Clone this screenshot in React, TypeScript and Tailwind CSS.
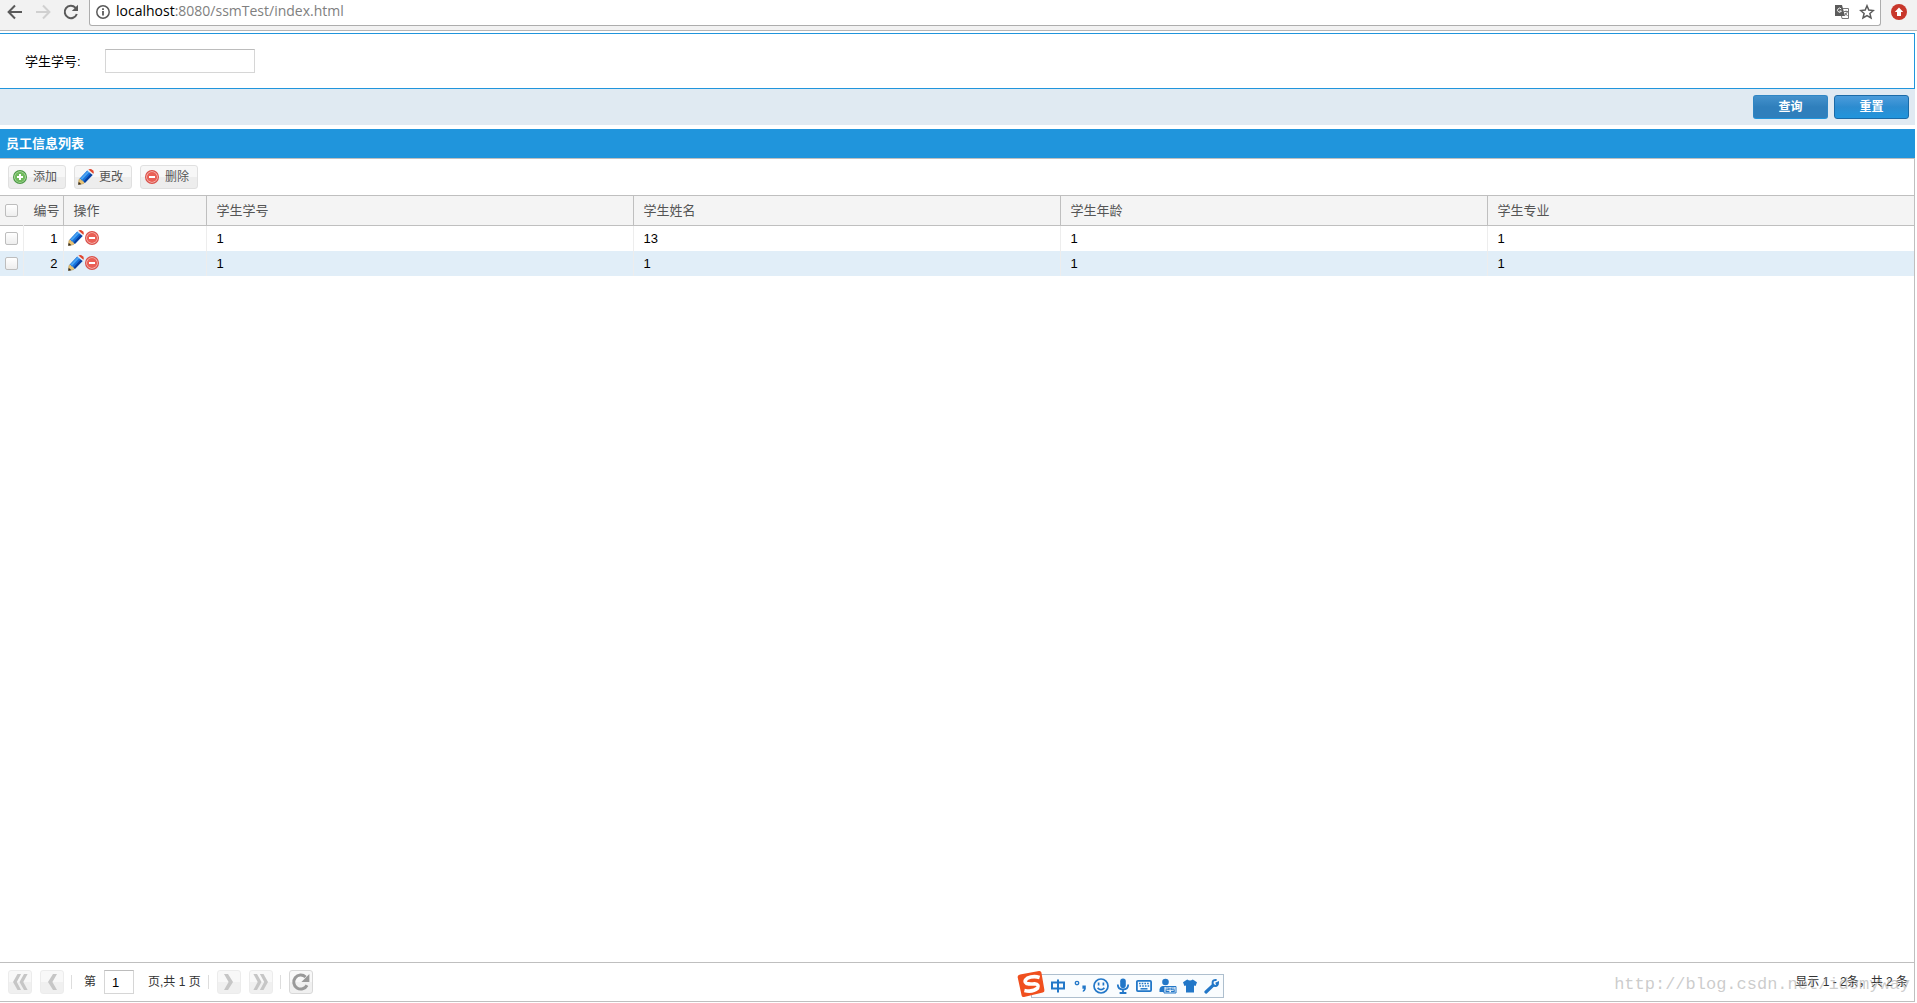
import type { ReactNode } from "react";
import clsx from "clsx";

interface Student {
  id: string;
  name: string;
  age: string;
  major: string;
}

const students: Student[] = [
  { id: "1", name: "13", age: "1", major: "1" },
  { id: "1", name: "1", age: "1", major: "1" },
];

function AddIcon() {
  return (
    <svg width="14" height="14" viewBox="0 0 14 14">
      <circle cx="7" cy="7" r="6.4" fill="#cfe8c6" stroke="#4c9a45" strokeWidth="1.2" />
      <circle cx="7" cy="7" r="5.2" fill="#6fba5c" />
      <path d="M7 4v6M4 7h6" stroke="#fff" strokeWidth="2" />
    </svg>
  );
}

function DeleteIcon() {
  return (
    <svg width="14" height="14" viewBox="0 0 14 14">
      <circle cx="7" cy="7" r="6.4" fill="#f8c4be" stroke="#d9504a" strokeWidth="1.2" />
      <circle cx="7" cy="7" r="5.1" fill="#ea5f55" />
      <path d="M4 7h6" stroke="#fff" strokeWidth="2" />
    </svg>
  );
}

function PencilIcon() {
  return (
    <svg width="16" height="16" viewBox="0 0 16 16">
      <path d="M0.4 15.6 1 10.4 3 9.2 7 12.8 5.6 14.6Z" fill="#eac373" stroke="#b08a3e" strokeWidth="0.5" />
      <path d="M0.2 15.8 0.7 12.8 3.4 15.2Z" fill="#2e2a26" />
      <path d="M1.4 9.8 9.4 1.2 14.8 5.8 6.8 14Q6.6 12.4 5 12.6 5 10.8 3.2 11.2 3 9.6 1.4 9.8Z" fill="#1670da" />
      <path d="M12.9 4.3 14.8 5.8 6.8 14Q6.6 12.8 5.6 12.6Z" fill="#0a3f9e" />
      <path d="M2.2 9.8 9.6 1.9 11.3 3.3 3.9 11Q3.4 9.8 2.2 9.8Z" fill="#4aa3f2" />
      <path d="M9.2 1.4 10.4 0.5 15.4 4.7 14.6 6Z" fill="#e8edf3" />
      <path d="M10.4 0.5Q12.6-0.6 14.8 1.2 16.4 3 15.4 4.7Z" fill="#e0442c" />
    </svg>
  );
}

function ToolButton({ icon, label }: { icon: ReactNode; label: string }) {
  return (
    <button
      type="button"
      className="flex h-6 w-[58px] items-center justify-between rounded-[3px] border border-[#e0e0e0] bg-linear-to-b from-[#f7f7f7] from-50% to-[#ededed] to-50% pr-2 pl-[3px] text-[12px] text-[#555]"
    >
      <span className="flex w-4 justify-center">{icon}</span>
      {label}
    </button>
  );
}

function PageButton({ label, children, active }: { label: string; children: ReactNode; active?: boolean }) {
  return (
    <button
      type="button"
      aria-label={label}
      className={clsx(
        "flex size-6 items-center justify-center rounded-[3px] border bg-linear-to-b from-[#f8f8f8] from-50% to-[#f0f0f0] to-50%",
        active ? "border-[#d8d8d8] text-[#999]" : "border-[#ececec] text-[#c6c6c6]",
      )}
    >
      <svg width="20" height="20" viewBox="0 0 20 20" fill="currentColor">
        {children}
      </svg>
    </button>
  );
}

function Separator() {
  return <span className="mr-2 ml-[7px] h-[14px] w-px bg-[#ddd]" />;
}

function Checkbox({ label }: { label: string }) {
  return (
    <input
      type="checkbox"
      aria-label={label}
      className="block size-[13px] appearance-none rounded-[2px] border border-[#bdbdbd] bg-linear-to-b from-white to-[#eee]"
    />
  );
}

function BrowserBar() {
  return (
    <header className="flex h-[31px] border-b border-[#b6b6b6] bg-[#f2f2f2]">
      <div className="flex h-6 w-[89px] shrink-0 items-center gap-3 pl-[7px] text-[#5a5a5a]">
        <button type="button" aria-label="后退">
          <svg width="16" height="16" viewBox="0 0 16 16" fill="none" stroke="currentColor" strokeWidth="2">
            <path d="M15 8H2M8 1.5 1.6 8 8 14.5" />
          </svg>
        </button>
        <button type="button" aria-label="前进" className="text-[#d0d0d0]">
          <svg width="16" height="16" viewBox="0 0 16 16" fill="none" stroke="currentColor" strokeWidth="2">
            <path d="M1 8h13M8 1.5 14.4 8 8 14.5" />
          </svg>
        </button>
        <button type="button" aria-label="刷新">
          <svg width="16" height="16" viewBox="0 0 16 16" fill="none" stroke="currentColor" strokeWidth="2">
            <path d="M13.8 10A6.2 6.2 0 1 1 12.4 3.6L13.6 5" />
            <path d="M15 0.8V7H8.8Z" fill="currentColor" stroke="none" />
          </svg>
        </button>
      </div>
      <div className="flex h-[26px] flex-1 items-center rounded-b-[3px] border border-t-0 border-[#adadad] bg-white px-[5px] pb-[2px] pl-[6px]">
        <svg width="14" height="14" viewBox="0 0 14 14" fill="none" stroke="#5a5a5a">
          <circle cx="7" cy="7" r="6.2" strokeWidth="1.5" />
          <path d="M7 6v4.6M7 3.2v1.7" strokeWidth="1.8" />
        </svg>
        <p className="ml-[6px] flex-1 pb-px font-['Open_Sans',sans-serif] text-[14px] leading-5 text-[#808080]">
          <span className="text-black">localhost</span>:8080/ssmTest/index.html
        </p>
        <svg width="14" height="14" viewBox="0 0 14 14">
          <path d="M5 3.5h8.5v10H7z" fill="#fff" stroke="#777" />
          <path d="M0 0h7l3 11H0z" fill="#5c5c5c" />
          <path d="M6.2 4A2 2 0 1 0 6.4 6H4.6" fill="none" stroke="#fff" />
          <path d="M9 6.5h4M11 5.5v1M12.4 6.5Q12 9 9.8 10.4M10 8l2.6 3" fill="none" stroke="#777" />
        </svg>
        <svg className="ml-[10px]" width="16" height="16" viewBox="0 0 16 16" fill="none" stroke="#5a5a5a" strokeWidth="1.5">
          <path d="M8 1.8 9.8 6.1 14.4 6.5 10.9 9.5 12 14 8 11.6 4 14 5.1 9.5 1.6 6.5 6.2 6.1Z" />
        </svg>
      </div>
      <div className="flex h-6 w-9 shrink-0 items-center pl-[10px]">
        <svg width="16" height="16" viewBox="0 0 16 16">
          <circle cx="8" cy="8" r="8" fill="#c8372b" />
          <path d="M8 3.6 12.2 8H10v4H6V8H3.8Z" fill="#fff" />
        </svg>
      </div>
    </header>
  );
}

function SearchForm() {
  return (
    <form className="mt-[2px] mr-[2px]">
      <div className="flex h-14 items-center border border-l-0 border-[#2095dc] bg-white">
        <label htmlFor="studentId" className="w-[105px] pl-[25px] text-[13px]">
          学生学号:
        </label>
        <input id="studentId" className="h-6 w-[150px] border border-[#d6d6d6] border-t-[#bcbcbc] px-1" />
      </div>
      <div className="flex h-9 items-center justify-end gap-[6px] bg-[#e0eaf2] px-[6px] text-[12px] font-bold text-white">
        <button
          type="button"
          className="h-6 w-[75px] rounded-[3px] border border-[#2f86c4] border-b-[#2095dc] bg-linear-to-b from-[#4492cc] via-[#2f7fbc] via-50% to-[#2f7fbc]"
        >
          查询
        </button>
        <button
          type="reset"
          className="h-6 w-[75px] rounded-[3px] border border-[#1b6ba8] bg-linear-to-b from-[#4b9cdb] via-[#2c8cd0] via-50% to-[#2095dc]"
        >
          重置
        </button>
      </div>
    </form>
  );
}

function StudentTable() {
  const head = "border-r border-[#bfbfbf] pl-[10px] text-left font-normal last:border-r-0";
  const cell = "border-r border-[#ededed] pl-[10px] last:border-r-0";
  return (
    <table className="w-full table-fixed border-collapse text-[13px]">
      <colgroup>
        <col className="w-[23px]" />
        <col className="w-10" />
        <col className="w-[143px]" />
        <col />
        <col />
        <col />
        <col />
      </colgroup>
      <thead>
        <tr className="h-[30px] border-y border-[#bfbfbf] bg-[#f4f4f4] text-[#555]">
          <th className="pl-[5px]">
            <Checkbox label="全选" />
          </th>
          <th className="border-r border-[#bfbfbf] pr-[3px] text-right font-normal">编号</th>
          <th className={head}>操作</th>
          <th className={head}>学生学号</th>
          <th className={head}>学生姓名</th>
          <th className={head}>学生年龄</th>
          <th className={head}>学生专业</th>
        </tr>
      </thead>
      <tbody>
        {students.map((student, index) => (
          <tr key={index} className="h-[25px] even:bg-[#e1eef8]">
            <td className="border-r border-[#ededed] pl-[5px]">
              <Checkbox label={`选择 ${index + 1}`} />
            </td>
            <td className="border-r border-[#ededed] pr-[5px] text-right">{index + 1}</td>
            <td className="border-r border-[#ededed] pl-1">
              <div className="flex items-center gap-px">
                <button type="button" aria-label="更改">
                  <PencilIcon />
                </button>
                <button type="button" aria-label="删除">
                  <DeleteIcon />
                </button>
              </div>
            </td>
            <td className={cell}>{student.id}</td>
            <td className={cell}>{student.name}</td>
            <td className={cell}>{student.age}</td>
            <td className={cell}>{student.major}</td>
          </tr>
        ))}
      </tbody>
    </table>
  );
}

function Pager() {
  return (
    <footer className="relative flex h-10 items-center border-y border-[#bfbfbf] pr-[6px] pl-2 text-[12px] text-[#333]">
      <div className="flex gap-2">
        <PageButton label="首页">
          <path d="M7.5 2h3.6L6.8 10l4.3 8H7.5L3 10Z" />
          <path d="M14 2h3.6L13.3 10l4.3 8H14L9.5 10Z" />
        </PageButton>
        <PageButton label="上一页">
          <path d="M11 2h4L10.4 10 15 18h-4L6 10Z" />
        </PageButton>
      </div>
      <Separator />
      <label htmlFor="page" className="mr-2 ml-1">
        第
      </label>
      <input
        id="page"
        defaultValue="1"
        className="h-6 w-[30px] border border-[#d6d6d6] border-t-[#bcbcbc] pl-[7px] text-[13px] text-black"
      />
      <span className="ml-[14px]">页,共 1 页</span>
      <Separator />
      <div className="flex gap-2">
        <PageButton label="下一页">
          <path d="M9 2H5L9.6 10 5 18h4L14 10Z" />
        </PageButton>
        <PageButton label="末页">
          <path d="M6 2H2.4L6.7 10 2.4 18H6L10.5 10Z" />
          <path d="M12.5 2H8.9L13.2 10 8.9 18h3.6L17 10Z" />
        </PageButton>
      </div>
      <Separator />
      <PageButton label="刷新" active>
        <path d="M16 13.2A7 7 0 1 1 14.6 5" fill="none" stroke="currentColor" strokeWidth="3" />
        <path d="M18.4 2v8h-8Z" />
      </PageButton>
      <span className="ml-auto">显示 1 - 2条，共 2 条</span>
      <span className="pointer-events-none absolute right-1 bottom-2 font-['Liberation_Mono',monospace] text-[17px] text-[#999]/50">
        http://blog.csdn.net/idomyway
      </span>
    </footer>
  );
}

// Floating input method bar
function InputMethodBar() {
  return (
    <div className="fixed bottom-[5px] left-[1017px] flex items-end">
      <svg className="relative" width="28" height="28" viewBox="0 0 28 28">
        <path d="M3 4.5 22 1q2-.3 2.4 1.6L27.4 20q.3 2-1.6 2.6L7 27q-2 .3-2.4-1.6L.6 7Q.4 5 3 4.5Z" fill="#f04f1e" />
        <path
          d="M22.6 7.4Q16 5.6 10.4 8.2 6 11.4 9.8 13.6 13 14.4 17.6 13.8 22.6 14.4 20.6 18.2 16 22.4 7.4 20.6"
          fill="none"
          stroke="#fff"
          strokeWidth="3.6"
        />
      </svg>
      <div className="-ml-[14px] flex h-6 w-[193px] items-center justify-between border border-[#aebfce] bg-[#f9fcfe] pr-[3px] pl-[18px] text-[#2277c8]">
        <svg width="16" height="16" viewBox="0 0 16 16" fill="none" stroke="currentColor" strokeWidth="2">
          <path d="M2 4.5h12v6H2ZM8 1.5v13" />
        </svg>
        <svg width="14" height="16" viewBox="0 0 14 16">
          <circle cx="4" cy="5" r="1.7" fill="none" stroke="currentColor" strokeWidth="1.3" />
          <path d="M9.4 7.4h3.4V11q-.6 2.4-3 3v-1.6q1-.5 1.2-1.6H9.4Z" fill="currentColor" />
        </svg>
        <svg width="16" height="16" viewBox="0 0 16 16" fill="none" stroke="currentColor" strokeWidth="1.7">
          <circle cx="8" cy="8" r="7" />
          <path d="M5.6 4.5v3M10.4 4.5v3M4.6 9.8q3.4 3.6 6.8 0" />
        </svg>
        <svg width="14" height="16" viewBox="0 0 14 16" fill="none" stroke="currentColor" strokeWidth="1.8">
          <rect x="4.2" y="0.5" width="5.6" height="9.5" rx="2.8" fill="currentColor" stroke="none" />
          <path d="M1.8 6.5q0 5 5.2 5t5.2-5M7 11.5V15M3.6 15h6.8" />
        </svg>
        <svg width="16" height="16" viewBox="0 0 16 16" fill="none" stroke="currentColor">
          <rect x="0.9" y="2.9" width="14.2" height="10.2" rx="1" strokeWidth="1.8" />
          <path d="M3 5.5h10M3.5 8h10" strokeWidth="1.5" strokeDasharray="1.6 1.1" />
          <path d="M4.5 10.8h7" strokeWidth="1.5" />
        </svg>
        <svg width="18" height="16" viewBox="0 0 18 16">
          <circle cx="6.5" cy="4" r="3.3" fill="currentColor" />
          <path d="M0.5 14V11.5Q1 8.4 4 8h5v6Z" fill="currentColor" />
          <path d="M5 8.5h12v6.5H5Z" fill="#fff" stroke="currentColor" />
          <path
            d="M6.5 10h3.6v1.8H7v1.8h3.4M15.6 10H12v1.8h3.2v1.8H12"
            fill="none"
            stroke="currentColor"
            strokeWidth="1.1"
          />
        </svg>
        <svg width="14" height="16" viewBox="0 0 14 16" fill="currentColor">
          <path d="M4.2 1.5q2.8 2 5.6 0L14 4.2 12.6 8 11 7.4V14.6H3V7.4L1.4 8 0 4.2Z" />
        </svg>
        <svg width="16" height="16" viewBox="0 0 16 16" fill="none" stroke="currentColor">
          <path d="M2 14 9 7.4" strokeWidth="3.2" strokeLinecap="round" />
          <path d="M12.6 2Q8.4 1.6 8.6 5 8.6 8 11.4 8 14 8 14 4.6L11.6 5.6" strokeWidth="2" />
        </svg>
      </div>
    </div>
  );
}

export default function App() {
  return (
    <div className="flex min-h-screen flex-col bg-white pb-px font-['Liberation_Sans','Noto_Sans_CJK_SC',sans-serif] leading-none text-black">
      <BrowserBar />
      <SearchForm />
      <main className="mt-1 mr-[2px] flex flex-1 flex-col border-r border-[#bfbfbf]">
        <h1 className="-mr-px flex h-[29px] items-center bg-[#2095dc] pl-[6px] text-[13px] font-bold text-white">
          员工信息列表
        </h1>
        <div className="flex h-[37px] items-center gap-2 border-t border-[#bfbfbf] px-2">
          <ToolButton icon={<AddIcon />} label="添加" />
          <ToolButton icon={<PencilIcon />} label="更改" />
          <ToolButton icon={<DeleteIcon />} label="删除" />
        </div>
        <div className="flex-1">
          <StudentTable />
        </div>
        <Pager />
      </main>
      <InputMethodBar />
    </div>
  );
}
